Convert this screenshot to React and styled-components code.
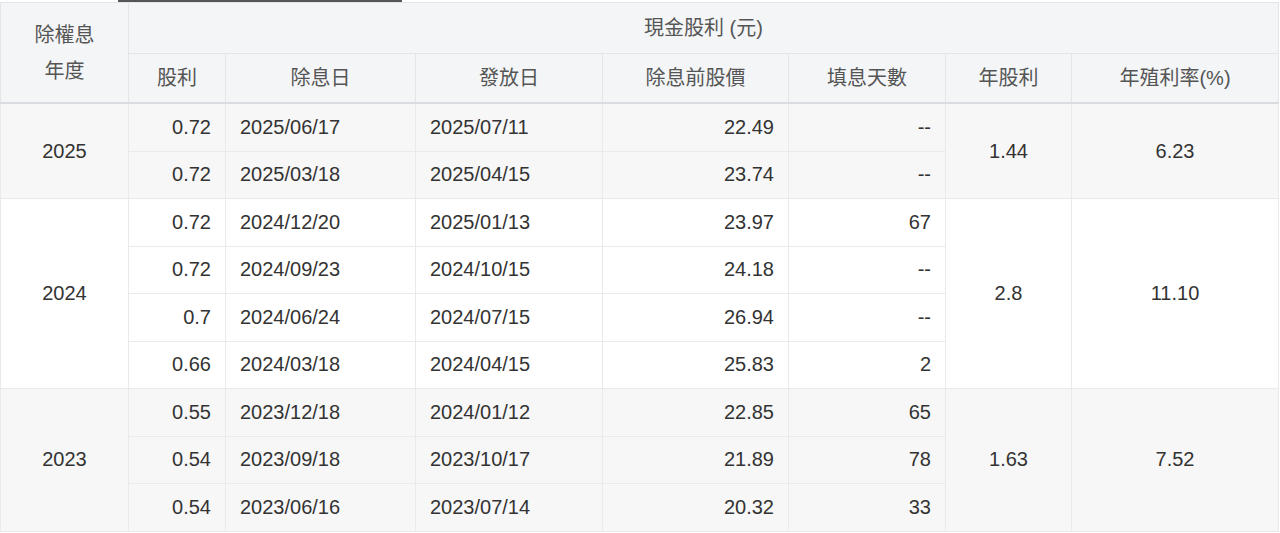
import React from 'react';
import styled, { createGlobalStyle } from 'styled-components';

const Global = createGlobalStyle`
  html, body { margin: 0; background: #fff; }
  body { font-family: "Liberation Sans", "Noto Sans CJK TC", sans-serif; }
`;

const groups = [
  { year: '2025', total: '1.44', rate: '6.23', shade: true, rows: [
    ['0.72', '2025/06/17', '2025/07/11', '22.49', '--'],
    ['0.72', '2025/03/18', '2025/04/15', '23.74', '--'],
  ] },
  { year: '2024', total: '2.8', rate: '11.10', shade: false, rows: [
    ['0.72', '2024/12/20', '2025/01/13', '23.97', '67'],
    ['0.72', '2024/09/23', '2024/10/15', '24.18', '--'],
    ['0.7', '2024/06/24', '2024/07/15', '26.94', '--'],
    ['0.66', '2024/03/18', '2024/04/15', '25.83', '2'],
  ] },
  { year: '2023', total: '1.63', rate: '7.52', shade: true, rows: [
    ['0.55', '2023/12/18', '2024/01/12', '22.85', '65'],
    ['0.54', '2023/09/18', '2023/10/17', '21.89', '78'],
    ['0.54', '2023/06/16', '2023/07/14', '20.32', '33'],
  ] },
];

const Wrap = styled.div`
  position: relative;
  padding-top: 2px;
  width: 1278px;
`;

const ScrollThumb = styled.div`
  position: absolute;
  top: 0;
  left: 118px;
  width: 284px;
  height: 2px;
  background: #555;
`;

const Table = styled.table`
  border-collapse: collapse;
  table-layout: fixed;
  width: 1278px;
  font-size: 20px;
  color: #333;
`;

const Th = styled.th`
  font-weight: normal;
  color: #555;
  background: #f4f5f7;
  border: 1px solid #e3e5e9;
  height: ${p => p.$h || 48}px;
  padding: 0;
  line-height: 36px;
  border-bottom: ${p => (p.$last ? '2px solid #d9dce1' : '1px solid #e3e5e9')};
`;

const Td = styled.td`
  border: 1px solid #e8eaed;
  height: 46.5px;
  padding: 0 14px;
  text-align: ${p => p.$align || 'left'};
  background: ${p => (p.$shade ? '#f7f7f7' : '#fff')};
`;

const widths = [128, 97, 190, 187, 186, 157, 126, 207];

export default function App() {
  return (
    <Wrap>
      <Global />
      <ScrollThumb />
      <Table>
        <colgroup>
          {widths.map((w, i) => <col key={i} style={{ width: w }} />)}
        </colgroup>
        <thead>
          <tr>
            <Th rowSpan={2} $last>除權息<br />年度</Th>
            <Th colSpan={7} $h={50}>現金股利 (元)</Th>
          </tr>
          <tr>
            {['股利', '除息日', '發放日', '除息前股價', '填息天數', '年股利', '年殖利率(%)'].map(h => (
              <Th key={h} $last>{h}</Th>
            ))}
          </tr>
        </thead>
        <tbody>
          {groups.map(g => g.rows.map((r, i) => (
            <tr key={g.year + i}>
              {i === 0 && <Td rowSpan={g.rows.length} $align="center" $shade={g.shade}>{g.year}</Td>}
              <Td $align="right" $shade={g.shade}>{r[0]}</Td>
              <Td $shade={g.shade}>{r[1]}</Td>
              <Td $shade={g.shade}>{r[2]}</Td>
              <Td $align="right" $shade={g.shade}>{r[3]}</Td>
              <Td $align="right" $shade={g.shade}>{r[4]}</Td>
              {i === 0 && <Td rowSpan={g.rows.length} $align="center" $shade={g.shade}>{g.total}</Td>}
              {i === 0 && <Td rowSpan={g.rows.length} $align="center" $shade={g.shade}>{g.rate}</Td>}
            </tr>
          )))}
        </tbody>
      </Table>
    </Wrap>
  );
}
